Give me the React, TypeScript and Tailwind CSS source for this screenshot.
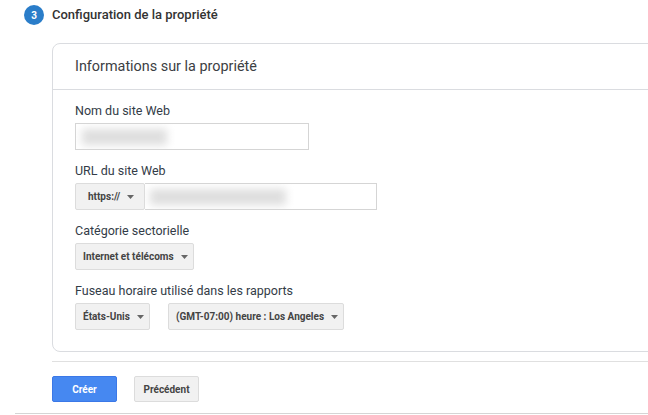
const Caret = () => (
  <svg width="7" height="4" viewBox="0 0 7 4" className="shrink-0">
    <path d="M0 0h7L3.5 4z" fill="#666" />
  </svg>
);

const Select = ({ label, className }: { label: string; className: string }) => (
  <div
    className={`flex h-[27px] items-center gap-[7px] whitespace-nowrap rounded-[2px] border border-[#dcdcdc] bg-[#f1f1f1] text-[10px] font-bold text-[#444] ${className}`}
  >
    <span>{label}</span>
    <Caret />
  </div>
);

const Label = ({ children }: { children: string }) => (
  <div className="text-[12.5px] leading-[16px] text-[#333c47]">{children}</div>
);

const Blur = ({ className }: { className: string }) => (
  <div className={`h-[16px] bg-[#dedede] blur-[4px] ${className}`} />
);

export default function App() {
  return (
    <div className="h-[415px] w-[648px] overflow-hidden bg-white font-['Roboto',sans-serif]">
      <div className="flex items-center gap-2 pl-6 pt-[5px]">
        <div className="flex h-5 w-5 items-center justify-center rounded-full bg-[#2a7dc9] text-[10px] font-bold text-white">
          3
        </div>
        <div className="text-[13px] font-medium text-[#333]">Configuration de la propriété</div>
      </div>

      <div className="ml-[52px] mt-[18px] h-[309px] w-[640px] rounded-[8px] border border-[#dadce0]">
        <div className="flex h-[46px] items-center border-b border-[#dadce0] pl-[22px] text-[14.4px] text-[#3c4043]">
          Informations sur la propriété
        </div>
        <div className="flex flex-col pl-[22px] pt-[13px]">
          <Label>Nom du site Web</Label>
          <div className="mt-[4px] flex h-[27px] w-[234px] items-center overflow-hidden border border-[#d5d5d5] pl-[6px]">
            <Blur className="w-[85px]" />
          </div>

          <div className="mt-[13px]">
            <Label>URL du site Web</Label>
          </div>
          <div className="mt-[4px] flex">
            <Select label="https://" className="w-[70px] pl-3" />
            <div className="flex h-[27px] w-[232px] items-center overflow-hidden border border-l-0 border-[#d5d5d5] pl-[5px]">
              <Blur className="w-[136px]" />
            </div>
          </div>

          <div className="mt-[13px]">
            <Label>Catégorie sectorielle</Label>
          </div>
          <div className="mt-[4px]">
            <Select label="Internet et télécoms" className="w-[119px] pl-[7px]" />
          </div>

          <div className="mt-[13px]">
            <Label>Fuseau horaire utilisé dans les rapports</Label>
          </div>
          <div className="mt-[4px] flex gap-[18px]">
            <Select label="États-Unis" className="w-[75px] pl-[7px]" />
            <Select label="(GMT-07:00) heure : Los Angeles" className="w-[176px] pl-[7px]" />
          </div>
        </div>
      </div>

      <div className="ml-[52px] mt-[9px] border-t border-[#e0e0e0]" />

      <div className="ml-[52px] mt-[14px] flex gap-[17px]">
        <div className="flex h-[26px] w-[65px] items-center justify-center rounded-[2px] border border-[#3b78e7] bg-[#4688f1] text-[10px] font-bold text-white">
          Créer
        </div>
        <div className="flex h-[26px] w-[65px] items-center justify-center rounded-[2px] border border-[#dcdcdc] bg-[#f1f1f1] text-[10px] font-bold text-[#444]">
          Précédent
        </div>
      </div>

      <div className="ml-[15px] mt-[11px] border-t border-[#d5d5d5]" />
    </div>
  );
}
